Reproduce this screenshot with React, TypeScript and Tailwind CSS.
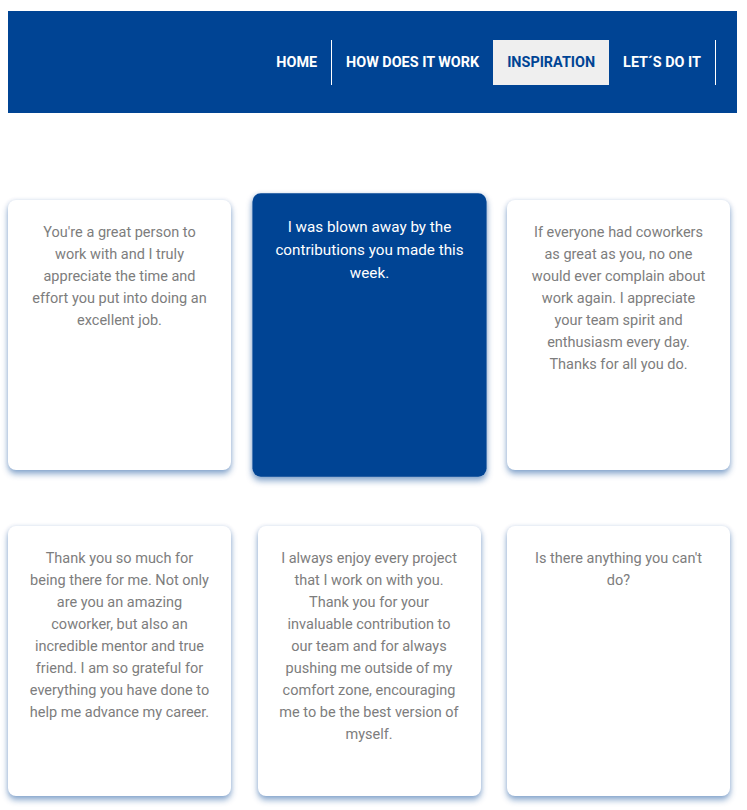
const navItems = [
  { label: "HOME", divider: true },
  { label: "HOW DOES IT WORK" },
  { label: "INSPIRATION", active: true },
  { label: "LET´S DO IT", divider: true },
];

const cards = [
  {
    text: "You're a great person to work with and I truly appreciate the time and effort you put into doing an excellent job.",
  },
  {
    text: "I was blown away by the contributions you made this week.",
    active: true,
  },
  {
    text: "If everyone had coworkers as great as you, no one would ever complain about work again. I appreciate your team spirit and enthusiasm every day. Thanks for all you do.",
  },
  {
    text: "Thank you so much for being there for me. Not only are you an amazing coworker, but also an incredible mentor and true friend. I am so grateful for everything you have done to help me advance my career.",
  },
  {
    text: "I always enjoy every project that I work on with you. Thank you for your invaluable contribution to our team and for always pushing me outside of my comfort zone, encouraging me to be the best version of myself.",
  },
  { text: "Is there anything you can't do?" },
];

export default function App() {
  return (
    <div className="min-h-[810px] bg-white pt-[11px] pl-2 font-['Roboto',sans-serif]">
      <header className="w-[729px] h-[102px] bg-[#004494] flex items-center justify-end pr-[21px]">
        <nav className="flex items-stretch h-[45px]">
          {navItems.map((item) => (
            <a
              key={item.label}
              href="#"
              className={
                "flex items-center px-[14px] pt-[2px] text-[14.4px] font-bold " +
                (item.active ? "bg-[#efefef] text-[#004494]" : "text-white") +
                (item.divider ? " border-r border-white" : "")
              }
            >
              {item.label}
            </a>
          ))}
        </nav>
      </header>

      <main className="w-[722px] mt-[87px] grid grid-cols-[223px_223px_223px] justify-between gap-y-[56px]">
        {cards.map((card, i) => (
          <div
            key={i}
            className={
              "h-[270px] rounded-lg px-5 pt-[22px] text-center text-[14.5px] leading-[22px] shadow-[0_4px_6px_rgba(0,68,148,0.45),0_0_4px_rgba(0,68,148,0.12)] " +
              (card.active
                ? "bg-[#004494] text-white scale-[1.05]"
                : "bg-white text-[#7d7d7d]")
            }
          >
            {card.text}
          </div>
        ))}
      </main>
    </div>
  );
}
